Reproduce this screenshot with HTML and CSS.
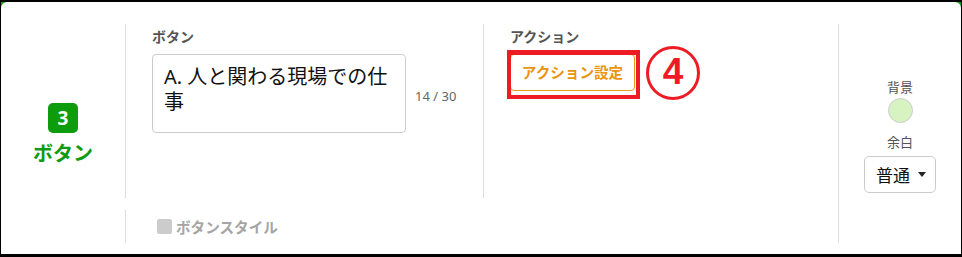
FILE: index.html
```html
<!DOCTYPE html>
<html lang="ja">
<head>
    <meta charset="UTF-8">
    <meta name="viewport" content="width=device-width, initial-scale=1.0">
    <title>ボタン</title>
    <link rel="stylesheet" href="styles.css">
</head>
<body>
    <div class="frame">
        <div class="card">
            <div class="card-grid">

                <div class="step">
                    <div class="step-num">3</div>
                    <div class="step-name">ボタン</div>
                </div>

                <div class="cell cell-text">
                    <div class="field-label">ボタン</div>
                    <div class="text-row">
                        <div class="text-box">A. 人と関わる現場での仕事</div>
                        <div class="counter">14 / 30</div>
                    </div>
                </div>

                <div class="cell cell-action">
                    <div class="field-label">アクション</div>
                    <div class="action-row">
                        <div class="action-wrap">
                            <button class="btn-action">アクション設定</button>
                            <div class="mark-box"></div>
                        </div>
                        <div class="mark-num">4</div>
                    </div>
                </div>

                <div class="cell cell-style">
                    <span class="check"></span>
                    <span class="check-label">ボタンスタイル</span>
                </div>

                <div class="side">
                    <div class="side-label">背景</div>
                    <div class="swatch"></div>
                    <div class="side-label side-gap">余白</div>
                    <div class="select">
                        <span>普通</span>
                        <span class="caret"></span>
                    </div>
                </div>

            </div>
        </div>
    </div>
</body>
</html>
```

FILE: styles.css
```css
* {
    box-sizing: border-box;
    margin: 0;
    padding: 0;
}

html, body {
    height: 100%;
    overflow: hidden;
}

body {
    background-color: #000;
    font-family: "Noto Sans", "Noto Sans CJK JP", sans-serif;
    color: #333;
}

.frame {
    margin: 2px 1px 3px 1px;
    height: 252px;
    background-color: #1a9a1a;
}

.card {
    height: 100%;
    background-color: #fff;
    border-radius: 6px 6px 0 0;
    padding: 22px 0 11px 0;
}

.card-grid {
    display: grid;
    grid-template-columns: 124px 358px 355px 1fr;
    grid-template-rows: 174px 33px;
    row-gap: 12px;
    height: 100%;
}

/* left step column */
.step {
    grid-row: 1 / 3;
    grid-column: 1;
    display: flex;
    flex-direction: column;
    align-items: center;
    justify-content: center;
    padding-top: 4px;
}

.step-num {
    width: 30px;
    height: 30px;
    border-radius: 5px;
    background-color: #0c9c0c;
    color: #fff;
    font-weight: 700;
    font-size: 19px;
    line-height: 30px;
    text-align: center;
}

.step-name {
    margin-top: 7px;
    color: #119a11;
    font-weight: 700;
    font-size: 20px;
    line-height: 28px;
}

/* middle cells */
.cell {
    border-left: 1px solid #ddd;
    padding: 3px 0 0 26px;
}

.field-label {
    font-size: 14px;
    font-weight: 700;
    line-height: 20px;
    color: #555;
    margin-bottom: 7px;
}

.text-row {
    display: flex;
    align-items: center;
}

.text-box {
    width: 254px;
    height: 79px;
    border: 1px solid #ccc;
    border-radius: 4px;
    padding: 9px 11px;
    font-size: 20px;
    line-height: 25px;
    color: #111;
}

.counter {
    margin-left: 9px;
    margin-top: 5px;
    font-size: 13px;
    color: #666;
}

.action-row {
    display: flex;
    align-items: flex-start;
}

.action-wrap {
    position: relative;
}

.btn-action {
    display: block;
    width: 125px;
    height: 37px;
    background-color: #fff;
    border: 1px solid #ec9a14;
    border-radius: 4px;
    color: #ea9410;
    font-family: "Noto Sans", "Noto Sans CJK JP", sans-serif;
    font-weight: 700;
    font-size: 14.6px;
    line-height: 35px;
    text-align: center;
}

/* red annotation overlay */
.mark-box {
    position: absolute;
    left: -3px;
    top: -4px;
    width: 133px;
    height: 49px;
    border: 4px solid #ed1c24;
    border-top-width: 5px;
}

.mark-num {
    width: 54px;
    height: 54px;
    margin: -8px 0 0 11px;
    border: 3.5px solid #ed1c24;
    border-radius: 50%;
    color: #ed1c24;
    font-family: "Liberation Sans", sans-serif;
    font-weight: 700;
    font-size: 37px;
    line-height: 46px;
    text-align: center;
}

.cell-style {
    grid-row: 2;
    grid-column: 2 / 4;
    display: flex;
    align-items: center;
    padding: 0 0 0 31px;
}

.check {
    width: 15px;
    height: 15px;
    border-radius: 2px;
    background-color: #ccc;
    margin-right: 4px;
}

.check-label {
    font-size: 14.6px;
    font-weight: 700;
    color: #a5a5a5;
}

/* right side column */
.side {
    grid-row: 1 / 3;
    grid-column: 4;
    border-left: 1px solid #ddd;
    display: flex;
    flex-direction: column;
    align-items: center;
    justify-content: center;
    padding-top: 4px;
}

.side-label {
    font-size: 13px;
    line-height: 18px;
    color: #555;
}

.side-gap {
    margin-top: 10px;
}

.swatch {
    margin-top: 2px;
    width: 25px;
    height: 25px;
    border-radius: 50%;
    background-color: #d8f3c2;
    border: 1px solid #ccc;
}

.select {
    margin-top: 5px;
    width: 72px;
    height: 37px;
    border: 1px solid #ccc;
    border-radius: 5px;
    display: flex;
    align-items: center;
    padding: 0 0 0 11px;
    font-size: 17px;
    color: #111;
}

.caret {
    margin-left: 8px;
    width: 0;
    height: 0;
    border-left: 4px solid transparent;
    border-right: 4px solid transparent;
    border-top: 5px solid #222;
}
```
